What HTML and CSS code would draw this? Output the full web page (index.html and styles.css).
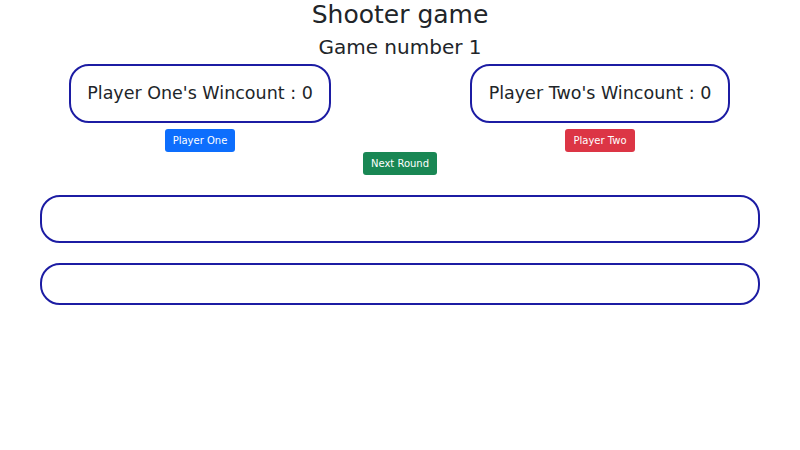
FILE: index.html
```html
<!DOCTYPE html>
<html>
<head>
    <title>Shooter game</title>
    <link rel="stylesheet" href="styles.css">
</head>
<body>
<div class="game">
    <h1>Shooter game</h1>
    <h2 id="gameNumber">Game number 1</h2>

    <div class="players">
        <div class="player">
            <div class="wincount">Player One's Wincount : <span id="winsOne">0</span></div>
            <button class="btn btn-blue" onclick="shoot(1)">Player One</button>
        </div>
        <div class="player">
            <div class="wincount">Player Two's Wincount : <span id="winsTwo">0</span></div>
            <button class="btn btn-red" onclick="shoot(2)">Player Two</button>
        </div>
    </div>

    <button class="btn btn-green" onclick="nextRound()">Next Round</button>

    <div class="log log-main" id="log"></div>
    <div class="log log-result" id="result"></div>
</div>

<script>
    let game = 1;
    let wins = [0, 0];

    function shoot(player) {
        const hit = Math.random() < 0.5;
        if (hit) {
            wins[player - 1]++;
            document.getElementById("winsOne").textContent = wins[0];
            document.getElementById("winsTwo").textContent = wins[1];
            document.getElementById("result").textContent = `Player ${player === 1 ? "One" : "Two"} wins this round!`;
        } else {
            document.getElementById("log").textContent = `Player ${player === 1 ? "One" : "Two"} missed.`;
        }
    }

    function nextRound() {
        game++;
        document.getElementById("gameNumber").textContent = `Game number ${game}`;
        document.getElementById("log").textContent = "";
        document.getElementById("result").textContent = "";
    }
</script>
</body>
</html>
```

FILE: styles.css
```css
body {
    font-family: "DejaVu Sans", Verdana, sans-serif;
    color: #212529;
    background-color: #fff;
    margin: 0;
}

.game {
    display: flex;
    flex-direction: column;
    align-items: center;
    padding: 0 40px;
}

h1 {
    font-size: 25px;
    font-weight: normal;
    line-height: 30px;
    margin: 0;
}

h2 {
    font-size: 20px;
    font-weight: normal;
    line-height: 34px;
    margin: 0;
}

.players {
    display: grid;
    grid-template-columns: 1fr 1fr;
    width: 800px;
}

.player {
    display: flex;
    flex-direction: column;
    align-items: center;
    gap: 6px;
}

.wincount {
    font-size: 17.5px;
    line-height: 23px;
    padding: 16px 16.5px;
    border: 2px solid #1c1ca3;
    border-radius: 20px;
}

.btn {
    font-family: inherit;
    font-size: 10px;
    line-height: 13px;
    color: #fff;
    border: none;
    border-radius: 3px;
    padding: 5px 8px;
    cursor: pointer;
}

.btn-blue {
    background-color: #0d6efd;
}

.btn-red {
    background-color: #dc3545;
}

.btn-green {
    background-color: #198754;
}

.log {
    align-self: stretch;
    border: 2px solid #1c1ca3;
    border-radius: 20px;
    padding: 0 16px;
}

.log-main {
    margin-top: 20px;
    height: 44px;
}

.log-result {
    margin-top: 20px;
    height: 38px;
}
```
